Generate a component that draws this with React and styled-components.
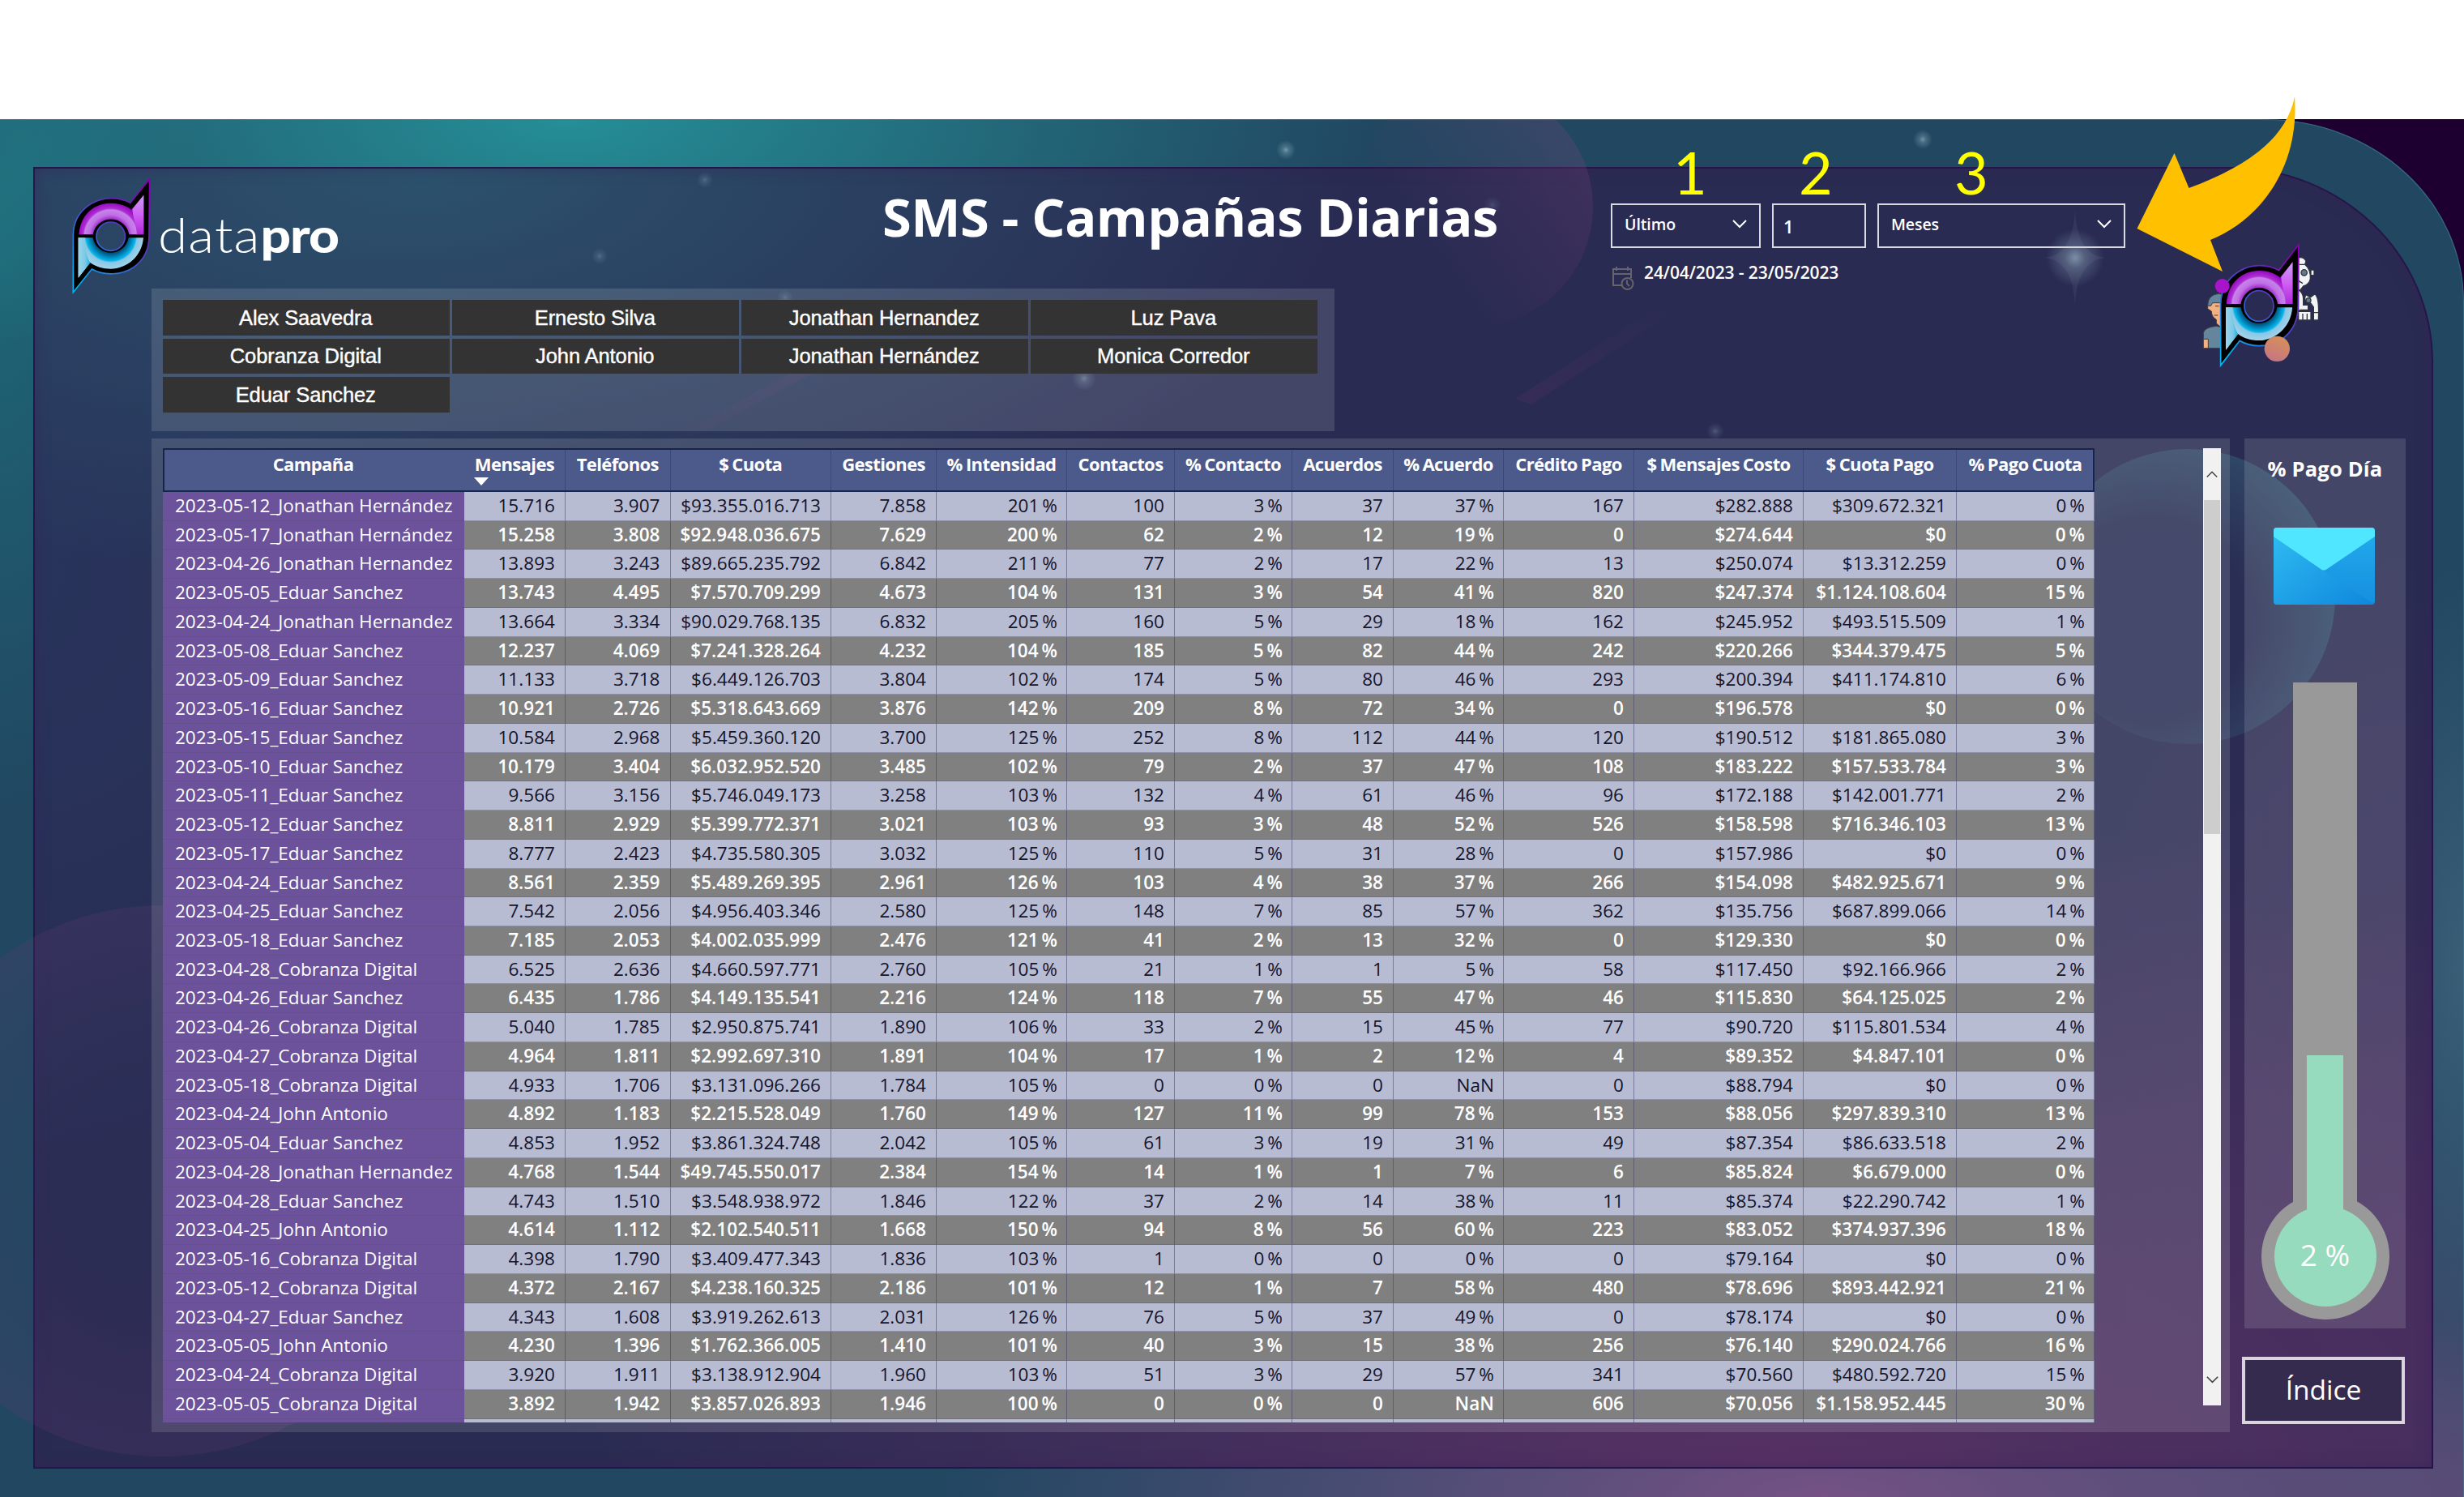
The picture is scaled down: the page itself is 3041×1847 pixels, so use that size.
import React from "react";
import styled, { createGlobalStyle } from "styled-components";

const ui = '"Open Sans", "Noto Sans", sans-serif';

const Global = createGlobalStyle`
  * { box-sizing: border-box; }
  body { margin: 0; background: #fff; font-family: ${ui}; color: #fff; }
`;

const Page = styled.div`
  position: relative;
  width: 3041px;
  height: 1847px;
  padding-top: 147px;
  background: #fff;
  overflow: hidden;
`;
const Corner = styled.div`
  height: 1700px;
  background: #1d0030;
`;
const Backdrop = styled.div`
  position: relative;
  height: 1700px;
  padding: 59px 38px 35px 41px;
  border-top-right-radius: 245px 225px;
  overflow: hidden;
  box-shadow: inset -1px 1px 1px rgba(70, 130, 150, 0.6);
  background:
    radial-gradient(ellipse 1000px 380px at 700px 0, rgba(37, 150, 156, 0.9), rgba(37, 150, 156, 0) 100%),
    radial-gradient(ellipse 240px 700px at 0 160px, rgba(28, 124, 134, 0.6), rgba(28, 124, 134, 0) 100%),
    radial-gradient(ellipse 1100px 300px at 2250px 1700px, rgba(122, 82, 136, 0.95), rgba(122, 82, 136, 0) 100%),
    radial-gradient(ellipse 150px 500px at 3041px 1050px, rgba(66, 100, 125, 0.8), rgba(66, 100, 125, 0) 100%),
    radial-gradient(ellipse 700px 500px at 3041px 1700px, rgba(78, 74, 112, 0.95), rgba(78, 74, 112, 0) 100%),
    #214761;
`;
const Board = styled.main`
  position: relative;
  height: 1606px;
  border-top-right-radius: 250px 240px;
  overflow: hidden;
  box-shadow: inset 0 0 0 2px #24164a, inset 0 0 18px rgba(62, 30, 90, 0.55);
  background:
    radial-gradient(ellipse 1150px 520px at 480px 0, rgba(44, 84, 110, 0.95), rgba(44, 84, 110, 0) 100%),
    radial-gradient(ellipse 1500px 900px at 2150px 1680px, rgba(92, 50, 102, 0.95), rgba(92, 50, 102, 0) 100%),
    radial-gradient(ellipse 500px 900px at 2960px 1350px, rgba(72, 44, 96, 0.6), rgba(72, 44, 96, 0) 100%),
    radial-gradient(ellipse 700px 900px at 0 500px, rgba(40, 56, 96, 0.7), rgba(40, 56, 96, 0) 100%),
    #292b52;
`;
const Sky = styled.svg`
  position: absolute;
  left: ${(p) => -p.$dx}px;
  top: ${(p) => -p.$dy}px;
  width: 3041px;
  height: 1700px;
  pointer-events: none;
`;

const Top = styled.header`
  position: relative;
  display: flex;
  height: 335px;
`;
const TopLeft = styled.div`
  width: 1947px;
`;
const Brand = styled.div`
  display: flex;
  height: 150px;
  padding: 12px 0 0 46px;
`;
const Mark = styled.svg`
  flex: none;
  width: 100px;
  height: 145px;
`;
const Word = styled.div`
  width: 224px;
  margin: 36px 0 0 8px;
  font: 300 59px/72px Lato, sans-serif;
  letter-spacing: 1px;
  white-space: nowrap;
  transform: scaleX(1.115);
  transform-origin: left;
  b { font-weight: 900; letter-spacing: -1px; }
`;
const Title = styled.h1`
  margin: 4px 0 0 670px;
  font: 700 65px/90px ${ui};
  letter-spacing: -0.55px;
  white-space: nowrap;
`;
const Glass = styled.section`
  background: rgba(255, 255, 255, 0.13);
`;
const Slicer = styled(Glass)`
  display: grid;
  grid-template: 44px 43px 44px / repeat(4, 353.5px);
  gap: 4px 3.5px;
  width: 1460px;
  height: 176px;
  margin-left: 146px;
  padding: 14px;
`;
const Chip = styled.button`
  border: 0;
  padding: 0 1px 1px 0;
  background: #333;
  color: #fff;
  font: 25.5px/42px "Liberation Sans", Arial, sans-serif;
  letter-spacing: -0.1px;
  -webkit-text-stroke: 0.4px #fff;
`;

const Filters = styled.div`
  width: 636px;
  padding-top: 45px;
`;
const FilterRow = styled.div`
  display: flex;
  gap: 14px;
`;
const Field = styled.div`
  display: flex;
  align-items: center;
  justify-content: space-between;
  width: ${(p) => p.$w}px;
  height: 55px;
  padding: 0 15px ${(p) => (p.$big ? 0 : 4)}px ${(p) => (p.$big ? 12 : 15)}px;
  border: 2px solid #d9d9e0;
  font-size: ${(p) => (p.$big ? 22 : 19.5)}px;
  font-weight: 600;
  letter-spacing: -0.1px;
`;
const DateRow = styled.div`
  display: flex;
  gap: 11px;
  margin-top: 16px;
  font: 600 21px/28px ${ui};
  letter-spacing: -0.1px;
  svg { margin-top: 6px; }
`;
const Mascot = styled.svg`
  margin: 83px 0 0 66px;
  width: 200px;
  height: 180px;
`;

const Body = styled.div`
  position: relative;
  display: flex;
  gap: 18px;
  height: 1226px;
  margin-left: 146px;
`;
const TablePanel = styled(Glass)`
  display: flex;
  justify-content: space-between;
  width: 2565px;
  padding: 12px 11px 0 14px;
`;
const columns = "372px 125px 129.5px 198.5px 130px 161px 133px 145px 125px 136px 161px 209px 189px 170px";
const Table = styled.div`
  width: 2384px;
  height: 1202px;
  overflow: hidden;
`;
const HeadRow = styled.div`
  display: grid;
  grid-template-columns: ${columns};
  height: 54px;
  background: #4b598b;
  box-shadow: inset 0 0 0 2px #18254a;
`;
const HeadCell = styled.div`
  position: relative;
  padding-top: 4px;
  text-align: center;
  font: 700 22px/30px ${ui};
  letter-spacing: -0.6px;
  word-spacing: -1px;
  white-space: nowrap;
  border-right: 1px solid ${(p) => (p.$line ? "rgba(30,40,80,.35)" : "transparent")};
`;
const Sort = styled.span`
  position: absolute;
  left: 12px;
  top: 36px;
  border: 9px solid transparent;
  border-top: 10px solid #fff;
  border-bottom: 0;
`;
const Row = styled.div`
  display: grid;
  grid-template-columns: ${columns};
  height: 35.74px;
  background: ${(p) => (p.$dark ? "#808080" : "#b8bcd3")};
  color: ${(p) => (p.$dark ? "#fff" : "#14142b")};
  font-weight: ${(p) => (p.$dark ? 600 : 400)};
`;
const Cell = styled.div`
  padding-right: ${(p) => (p.$percent ? 11 : 12)}px;
  border-right: 1px solid rgba(60, 60, 100, 0.5);
  border-bottom: 1px solid rgba(90, 90, 120, 0.45);
  text-align: right;
  font-size: 22.5px;
  line-height: 34px;
  letter-spacing: 0.05px;
  word-spacing: -2px;
  white-space: nowrap;
`;
const NameCell = styled(Cell)`
  padding: 0 0 0 15px;
  border-right: 0;
  border-bottom-color: #65508f;
  background: #6b529b;
  color: #fff;
  text-align: left;
  font-weight: 500;
  letter-spacing: 0;
  word-spacing: 0;
`;
const Scroll = styled.div`
  display: flex;
  flex-direction: column;
  width: 22px;
  height: 1181px;
  background: #f1f1f1;
`;
const ScrollEnd = styled.div`
  display: grid;
  place-items: center;
  height: 64px;
`;
const Thumb = styled.div`
  height: 412px;
  margin: 0 1px auto;
  background: #cdcdcd;
`;

const Side = styled.aside`
  width: 199px;
`;
const Gauge = styled(Glass)`
  display: flex;
  flex-direction: column;
  align-items: center;
  height: 1098px;
`;
const GaugeTitle = styled.h2`
  margin: 19px 0 0;
  font: 700 25.5px/36px ${ui};
  letter-spacing: 0.2px;
  white-space: nowrap;
`;
const Mail = styled.svg`
  flex: none;
  margin: 55px 3px 0 0;
  width: 125px;
  height: 95px;
`;
const Tube = styled.div`
  display: flex;
  flex-direction: column;
  align-items: center;
  justify-content: flex-end;
  width: 79px;
  height: 650px;
  margin-top: 96px;
  background: #999;
`;
const Fluid = styled.div`
  width: 45px;
  height: 190px;
  background: #96dbbd;
  position: relative;
  z-index: 1;
`;
const Bulb = styled.div`
  flex: none;
  display: grid;
  place-items: center;
  width: 158px;
  height: 156px;
  margin-top: -20px;
  padding-bottom: 4px;
  border: 16px solid #999;
  border-radius: 50%;
  background: #96dbbd;
  font: 400 37px/50px ${ui};
`;
const IndexButton = styled.button`
  display: block;
  width: 201px;
  height: 83px;
  margin: 35px 0 0 -3px;
  padding: 0 0 4px;
  border: 4px solid #d9d4de;
  background: #352b4e;
  color: #fff;
  font: 500 33.5px/50px ${ui};
`;

const Step = styled.span`
  position: absolute;
  top: 168px;
  left: ${(p) => p.$x}px;
  color: #ff0;
  font: 400 72px/88px Lato, sans-serif;
`;
const Arrow = styled.svg`
  position: absolute;
  left: 2630px;
  top: 110px;
  width: 220px;
  height: 235px;
`;

const Chevron = ({ w = 18, h = 11, color = "#fff", up, sw = 2 }) => (
  <svg width={w} height={h} viewBox="0 0 18 11" fill="none" stroke={color} strokeWidth={sw}>
    <path d={up ? "M1 10 9 2l8 8" : "M1 1l8 8 8-8"} />
  </svg>
);

const MarkArt = ({ id }) => (
  <>
    <defs>
      <linearGradient id={id + "edge"} x1="0.8" y1="0" x2="0.2" y2="1">
        <stop offset="0" stopColor="#8a00b0" />
        <stop offset=".5" stopColor="#4a48c8" />
        <stop offset="1" stopColor="#00b4f0" />
      </linearGradient>
      <radialGradient id={id + "p"} gradientUnits="userSpaceOnUse" cx="184" cy="230" r="128">
        <stop offset=".5" stopColor="#a030c8" />
        <stop offset=".62" stopColor="#c070e6" />
        <stop offset=".76" stopColor="#c684e8" />
        <stop offset=".8" stopColor="#b02fd6" />
        <stop offset="1" stopColor="#8d00b8" />
      </radialGradient>
      <linearGradient id={id + "pw"} x1="0" y1="0" x2="0" y2="1">
        <stop offset="0" stopColor="#c9a0ee" />
        <stop offset=".5" stopColor="#d060f4" />
        <stop offset="1" stopColor="#b02ad8" />
      </linearGradient>
      <radialGradient id={id + "c"} gradientUnits="userSpaceOnUse" cx="184" cy="230" r="128">
        <stop offset=".5" stopColor="#00527e" />
        <stop offset=".66" stopColor="#009fd6" />
        <stop offset=".72" stopColor="#12b4e6" />
        <stop offset=".76" stopColor="#86c8e8" />
        <stop offset=".95" stopColor="#a4d2e8" />
      </radialGradient>
      <linearGradient id={id + "cw"} x1="0" y1="0" x2="1" y2="0">
        <stop offset="0" stopColor="#9ad6ec" />
        <stop offset=".6" stopColor="#7cc8e4" />
        <stop offset="1" stopColor="#08b4e4" />
      </linearGradient>
    </defs>
    <path
      fillRule="evenodd"
      fill="#000"
      stroke={`url(#${id}edge)`}
      strokeWidth="5"
      d="M328 18 256 107C216 84 155 84 112 110 70 135 46 175 45 225V438L114 352C160 378 226 374 268 346 308 318 326 275 326 230ZM184 178a53 53 0 1 1 0 106 53 53 0 0 1 0-106Z"
    />
    <path fill={`url(#${id}p)`} d="M66 224C72 146 126 108 184 108c30 0 58 9 76 24L306 78V224H252A68 68 0 0 0 118 224Z" />
    <path fill={`url(#${id}pw)`} d="M306 78 264 130C266 160 282 200 280 224H306Z" />
    <path fill={`url(#${id}c)`} d="M64 236H118A67 67 0 0 0 250 236H305C300 305 244 351 184 351 154 351 128 343 108 328L64 384Z" />
    <path fill={`url(#${id}cw)`} d="M64 236H88C90 262 88 296 108 328L64 384Z" />
  </>
);

const stars = [
  [870, 75, 10, 0.3], [740, 169, 10, 0.3], [969, 220, 10, 0.25], [1587, 38, 12, 0.6], [1338, 320, 15, 0.4],
  [1842, 106, 11, 0.2], [2373, 25, 12, 0.6], [2561, 171, 36, 0.6], [2117, 385, 11, 0.3],
];

const Scenery = ({ id, dx, dy }) => (
  <Sky $dx={dx} $dy={dy} viewBox="0 0 3041 1700">
    <defs>
      <radialGradient id={id + "glow"}>
        <stop offset="0" stopColor="#a9c9d8" />
        <stop offset=".35" stopColor="#a9c9d8" stopOpacity=".45" />
        <stop offset="1" stopColor="#a9c9d8" stopOpacity="0" />
      </radialGradient>
      <linearGradient id={id + "orb"} x1="0" y1=".9" x2="1" y2=".2">
        <stop offset=".3" stopColor="#7a3a78" stopOpacity="0" />
        <stop offset="1" stopColor="#8a4680" stopOpacity=".26" />
      </linearGradient>
      <radialGradient id={id + "teal"} cx=".38" cy=".58" r=".72">
        <stop offset=".45" stopColor="#3f8a98" stopOpacity=".03" />
        <stop offset="1" stopColor="#3f8a98" stopOpacity=".38" />
      </radialGradient>
      <radialGradient id={id + "low"} cx=".5" cy=".5" r=".5">
        <stop offset=".4" stopColor="#6a3a78" stopOpacity=".04" />
        <stop offset="1" stopColor="#6a3a78" stopOpacity=".2" />
      </radialGradient>
      <linearGradient id={id + "streak"} x1="0" y1="1" x2="1" y2="0">
        <stop offset="0" stopColor="#a03a80" stopOpacity="0" />
        <stop offset=".5" stopColor="#a03a80" stopOpacity=".13" />
        <stop offset="1" stopColor="#a03a80" stopOpacity="0" />
      </linearGradient>
    </defs>
    <circle cx="1818" cy="108" r="148" fill={`url(#${id}orb)`} />
    <circle cx="2700" cy="589" r="182" fill={`url(#${id}teal)`} />
    <circle cx="200" cy="1310" r="340" fill={`url(#${id}low)`} />
    <path d="M800 410 1000 300 1006 312 820 412ZM1870 345 2060 222 2068 236 1890 352Z" fill={`url(#${id}streak)`} />
    {stars.map(([x, y, r, o]) => (
      <circle key={x} cx={x} cy={y} r={r} opacity={o} fill={`url(#${id}glow)`} />
    ))}
    <path d="M2561 110Q2563 169 2600 171 2563 173 2561 232 2559 173 2522 171 2559 169 2561 110Z" fill="#c4cfe0" opacity=".07" />
  </Sky>
);

const agents = ["Alex Saavedra", "Ernesto Silva", "Jonathan Hernandez", "Luz Pava", "Cobranza Digital", "John Antonio", "Jonathan Hernández", "Monica Corredor", "Eduar Sanchez"];
const heads = ["Campaña", "Mensajes", "Teléfonos", "$ Cuota", "Gestiones", "% Intensidad", "Contactos", "% Contacto", "Acuerdos", "% Acuerdo", "Crédito Pago", "$ Mensajes Costo", "$ Cuota Pago", "% Pago Cuota"];
const percentColumns = [5, 7, 9, 13];
const data = `05-12_Jonathan Hernández|15.716|3.907|$93.355.016.713|7.858|201|100|3|37|37|167|$282.888|$309.672.321|0
05-17_Jonathan Hernández|15.258|3.808|$92.948.036.675|7.629|200|62|2|12|19|0|$274.644|$0|0
04-26_Jonathan Hernandez|13.893|3.243|$89.665.235.792|6.842|211|77|2|17|22|13|$250.074|$13.312.259|0
05-05_Eduar Sanchez|13.743|4.495|$7.570.709.299|4.673|104|131|3|54|41|820|$247.374|$1.124.108.604|15
04-24_Jonathan Hernandez|13.664|3.334|$90.029.768.135|6.832|205|160|5|29|18|162|$245.952|$493.515.509|1
05-08_Eduar Sanchez|12.237|4.069|$7.241.328.264|4.232|104|185|5|82|44|242|$220.266|$344.379.475|5
05-09_Eduar Sanchez|11.133|3.718|$6.449.126.703|3.804|102|174|5|80|46|293|$200.394|$411.174.810|6
05-16_Eduar Sanchez|10.921|2.726|$5.318.643.669|3.876|142|209|8|72|34|0|$196.578|$0|0
05-15_Eduar Sanchez|10.584|2.968|$5.459.360.120|3.700|125|252|8|112|44|120|$190.512|$181.865.080|3
05-10_Eduar Sanchez|10.179|3.404|$6.032.952.520|3.485|102|79|2|37|47|108|$183.222|$157.533.784|3
05-11_Eduar Sanchez|9.566|3.156|$5.746.049.173|3.258|103|132|4|61|46|96|$172.188|$142.001.771|2
05-12_Eduar Sanchez|8.811|2.929|$5.399.772.371|3.021|103|93|3|48|52|526|$158.598|$716.346.103|13
05-17_Eduar Sanchez|8.777|2.423|$4.735.580.305|3.032|125|110|5|31|28|0|$157.986|$0|0
04-24_Eduar Sanchez|8.561|2.359|$5.489.269.395|2.961|126|103|4|38|37|266|$154.098|$482.925.671|9
04-25_Eduar Sanchez|7.542|2.056|$4.956.403.346|2.580|125|148|7|85|57|362|$135.756|$687.899.066|14
05-18_Eduar Sanchez|7.185|2.053|$4.002.035.999|2.476|121|41|2|13|32|0|$129.330|$0|0
04-28_Cobranza Digital|6.525|2.636|$4.660.597.771|2.760|105|21|1|1|5|58|$117.450|$92.166.966|2
04-26_Eduar Sanchez|6.435|1.786|$4.149.135.541|2.216|124|118|7|55|47|46|$115.830|$64.125.025|2
04-26_Cobranza Digital|5.040|1.785|$2.950.875.741|1.890|106|33|2|15|45|77|$90.720|$115.801.534|4
04-27_Cobranza Digital|4.964|1.811|$2.992.697.310|1.891|104|17|1|2|12|4|$89.352|$4.847.101|0
05-18_Cobranza Digital|4.933|1.706|$3.131.096.266|1.784|105|0|0|0|NaN|0|$88.794|$0|0
04-24_John Antonio|4.892|1.183|$2.215.528.049|1.760|149|127|11|99|78|153|$88.056|$297.839.310|13
05-04_Eduar Sanchez|4.853|1.952|$3.861.324.748|2.042|105|61|3|19|31|49|$87.354|$86.633.518|2
04-28_Jonathan Hernandez|4.768|1.544|$49.745.550.017|2.384|154|14|1|1|7|6|$85.824|$6.679.000|0
04-28_Eduar Sanchez|4.743|1.510|$3.548.938.972|1.846|122|37|2|14|38|11|$85.374|$22.290.742|1
04-25_John Antonio|4.614|1.112|$2.102.540.511|1.668|150|94|8|56|60|223|$83.052|$374.937.396|18
05-16_Cobranza Digital|4.398|1.790|$3.409.477.343|1.836|103|1|0|0|0|0|$79.164|$0|0
05-12_Cobranza Digital|4.372|2.167|$4.238.160.325|2.186|101|12|1|7|58|480|$78.696|$893.442.921|21
04-27_Eduar Sanchez|4.343|1.608|$3.919.262.613|2.031|126|76|5|37|49|0|$78.174|$0|0
05-05_John Antonio|4.230|1.396|$1.762.366.005|1.410|101|40|3|15|38|256|$76.140|$290.024.766|16
04-24_Cobranza Digital|3.920|1.911|$3.138.912.904|1.960|103|51|3|29|57|341|$70.560|$480.592.720|15
05-05_Cobranza Digital|3.892|1.942|$3.857.026.893|1.946|100|0|0|0|NaN|606|$70.056|$1.158.952.445|30`
  .split("\n")
  .map((line) => line.split("|"));

const show = (value, i) => (percentColumns.includes(i) && value !== "NaN" ? value + " %" : value);

export default function App() {
  return (
    <Page>
      <Global />
      <Corner>
        <Backdrop>
          <Scenery id="out" dx={0} dy={0} />
          <Board>
            <Scenery id="in" dx={41} dy={59} />
            <Top>
              <TopLeft>
                <Brand>
                  <Mark viewBox="35 10 300 435">
                    <MarkArt id="a" />
                  </Mark>
                  <Word>data<b>pro</b></Word>
                  <Title>SMS - Campañas Diarias</Title>
                </Brand>
                <Slicer>
                  {agents.map((a) => <Chip key={a}>{a}</Chip>)}
                </Slicer>
              </TopLeft>
              <Filters>
                <FilterRow>
                  <Field $w={185}>Último<Chevron /></Field>
                  <Field $w={116} $big>1</Field>
                  <Field $w={306}>Meses<Chevron /></Field>
                </FilterRow>
                <DateRow>
                  <svg width="30" height="32" viewBox="0 0 30 32" fill="none" stroke="#66646a" strokeWidth="2">
                    <path d="M15 24H3V4H25V15M3 10H25M7 1V6M21 1V6" />
                    <circle cx="20.500" cy="22" r="7" />
                    <path d="M20 17.500V22L23 25" />
                  </svg>
                  24/04/2023 - 23/05/2023
                </DateRow>
              </Filters>
              <Mascot viewBox="0 0 600 540">
                <g stroke="#3c3c44" strokeWidth="3">
                  <path fill="#64859c" d="M88 422V365Q92 345 135 340L160 345V422Z" />
                  <path fill="#f3b083" d="M88 388H106V422H88ZM118 250H160V350L136 330V316Q118 306 118 285L104 276V262H116Z" />
                  <path fill="#64859c" d="M104 265Q104 224 145 220L160 224V254H122L116 265Z" />
                  <path fill="none" d="M132 266H146M128 300H142" />
                </g>
                <g fill="#f2f4f6" stroke="#30343c" strokeWidth="4">
                  <path d="M440 86Q462 84 468 100L464 112Q486 130 484 165 480 186 458 192L440 215Z" />
                  <circle cx="461" cy="142" r="11" fill="#64798c" />
                  <path d="M486 132H498V152H486ZM440 205Q456 215 458 236V262H476V282H440Z" />
                  <path d="M470 250Q458 240 468 224L484 234 500 222Q518 230 514 318H496V270L486 256Z" />
                  <path d="M440 286H486V318H440Z" />
                  <circle cx="477" cy="245" r="9" fill="#64798c" />
                  <path d="M456 294V318M472 294V318M446 280H480M496 290H514M440 172 456 182M444 112H462" fill="none" />
                </g>
                <g transform="translate(106 20) scale(1.021 1.063)">
                  <MarkArt id="b" />
                </g>
                <circle cx="158" cy="192" r="27" fill="#a814cc" />
                <linearGradient id="ball" x1=".7" y1="0" x2=".3" y2="1">
                  <stop offset="0" stopColor="#d69058" />
                  <stop offset="1" stopColor="#c67584" />
                </linearGradient>
                <circle cx="361" cy="424" r="47" fill="url(#ball)" />
              </Mascot>
            </Top>
            <Body>
              <TablePanel>
                <Table>
                  <HeadRow>
                    {heads.map((h, i) => (
                      <HeadCell key={h} $line={i > 0}>{h}{i === 1 && <Sort />}</HeadCell>
                    ))}
                  </HeadRow>
                  {data.map((r, n) => (
                    <Row key={r[0]} $dark={n % 2 === 1}>
                      <NameCell>2023-{r[0]}</NameCell>
                      {r.slice(1).map((v, i) => (
                        <Cell key={i} $percent={percentColumns.includes(i + 1)}>{show(v, i + 1)}</Cell>
                      ))}
                    </Row>
                  ))}
                  <Row>
                    <NameCell />
                    {heads.slice(1).map((h) => <Cell key={h} />)}
                  </Row>
                </Table>
                <Scroll>
                  <ScrollEnd><Chevron w={14} h={12} color="#444" up /></ScrollEnd>
                  <Thumb />
                  <ScrollEnd><Chevron w={15} h={11} color="#444" /></ScrollEnd>
                </Scroll>
              </TablePanel>
              <Side>
                <Gauge>
                  <GaugeTitle>% Pago Día</GaugeTitle>
                  <Mail viewBox="0 0 125 95">
                    <defs>
                      <linearGradient id="mail" x1="0" y1="0" x2="1" y2="1">
                        <stop offset="0" stopColor="#30bdf2" />
                        <stop offset="1" stopColor="#0f86dc" />
                      </linearGradient>
                      <linearGradient id="mailr" x1="0" y1="0" x2="0" y2="1">
                        <stop offset="0" stopColor="#22a8ea" />
                        <stop offset="1" stopColor="#168fe0" />
                      </linearGradient>
                    </defs>
                    <rect width="125" height="95" rx="4" fill="url(#mail)" />
                    <path d="M62 53 125 11V91L122 93Z" fill="url(#mailr)" />
                    <path d="M0 11V4Q0 0 4 0H121Q125 0 125 4V11L66 51Q62 54 58 51Z" fill="#50e6ff" />
                  </Mail>
                  <Tube><Fluid /></Tube>
                  <Bulb>2 %</Bulb>
                </Gauge>
                <IndexButton>Índice</IndexButton>
              </Side>
            </Body>
          </Board>
        </Backdrop>
      </Corner>
      <Step $x={2065}>1</Step>
      <Step $x={2220}>2</Step>
      <Step $x={2412}>3</Step>
      <Arrow viewBox="2630 110 220 235">
        <path
          fill="#ffc000"
          d="M2832 119C2838 200 2796 268 2728 296L2743 335 2637.500 282 2683.500 189 2701.500 232C2775 205 2822 170 2832 119Z"
        />
      </Arrow>
    </Page>
  );
}
